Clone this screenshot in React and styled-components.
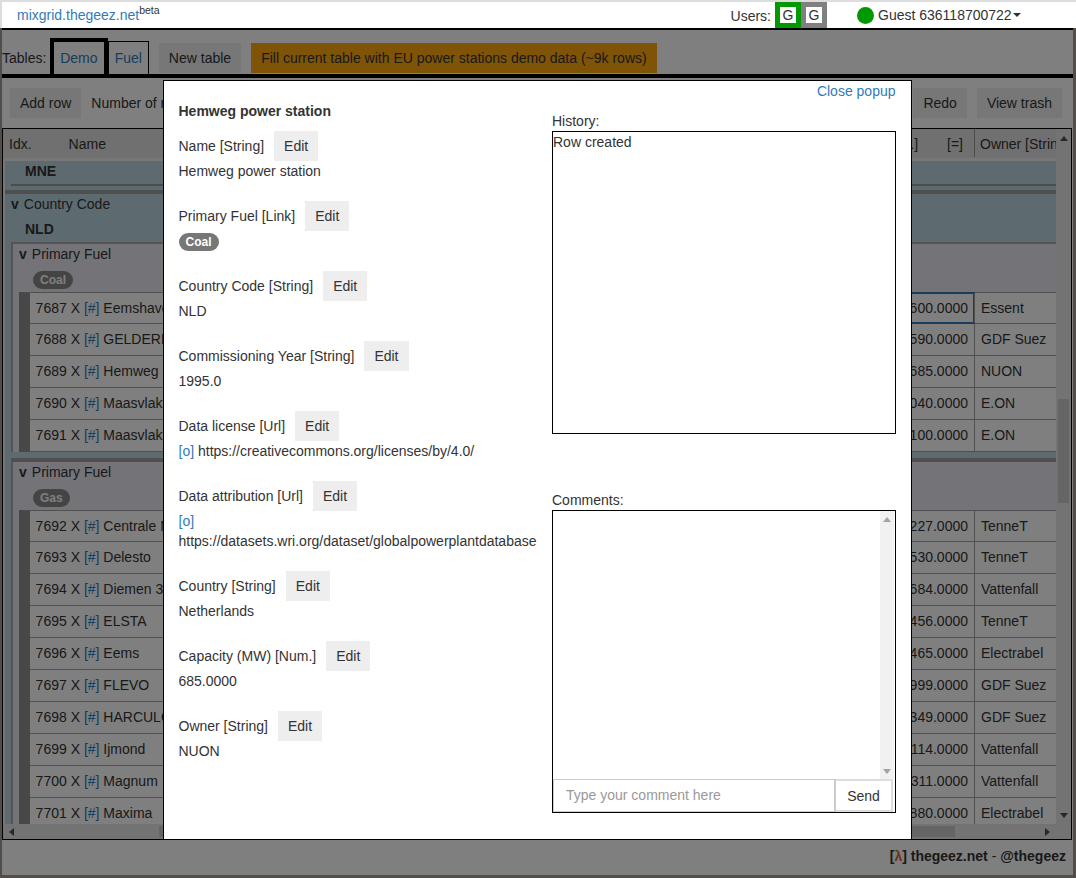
import React from "react";
import styled, { createGlobalStyle } from "styled-components";

const GlobalStyle = createGlobalStyle`
  html, body {
    margin: 0;
    padding: 0;
    overflow: hidden;
  }
  body {
    font-family: "Liberation Sans", Arial, sans-serif;
    font-size: 14px;
    line-height: 20px;
    color: #333;
  }
  * {
    box-sizing: border-box;
  }
`;

const Root = styled.div`
  display: flex;
  flex-direction: column;
  width: 1076px;
  height: 878px;
  padding: 0 3px 3px 2px;
  background: #a49e94;
  overflow: hidden;
`;

const Header = styled.div`
  position: relative;
  z-index: 20;
  display: flex;
  align-items: center;
  flex: none;
  height: 28px;
  margin: 0 -3px 0 -2px;
  padding-left: 15px;
  background: #fff;
  border-top: 2px solid #ddd;
  border-left: 2px solid #ddd;
`;

const A = styled.a`
  color: #337ab7;
  text-decoration: none;
`;

const Brand = styled(A)`
  flex: 1;
  margin-top: -1px;
  sup {
    color: #333;
    font-size: 10.5px;
    line-height: 0;
    vertical-align: baseline;
    position: relative;
    top: -6px;
  }
`;

const UsersLabel = styled.span`
  margin: 2px 4px 0 0;
`;

const UserBadge = styled.span`
  display: flex;
  align-items: center;
  justify-content: center;
  width: 26px;
  height: 26px;
  border: 5px solid ${(p) => p.$color};
  background: #fff;
`;

const Guest = styled.div`
  display: flex;
  align-items: center;
  width: 249px;
  padding-left: 30px;
`;

const Dot = styled.span`
  width: 17px;
  height: 17px;
  margin-right: 4px;
  border-radius: 50%;
  background: #090;
`;

const Caret = styled.span`
  margin-left: 1px;
  border-top: 4px solid #333;
  border-left: 4px solid transparent;
  border-right: 4px solid transparent;
`;

const Main = styled.div`
  display: flex;
  flex-direction: column;
  flex: 1;
  min-height: 0;
  background: #fff;
  border-top: 2px solid #000;
`;

const TablesBar = styled.div`
  display: flex;
  align-items: flex-end;
  flex: none;
  height: 48px;
  border-bottom: 4px solid #000;
`;

const TablesLabel = styled.span`
  align-self: flex-end;
  margin: 0 3.5px 6px 0;
`;

const Tab = styled(A)`
  display: flex;
  align-items: center;
  justify-content: center;
  height: ${(p) => (p.$active ? 36 : 33)}px;
  width: ${(p) => (p.$active ? 58 : 41)}px;
  border: ${(p) => (p.$active ? "4px" : "1px")} solid #000;
  border-bottom: 0;
`;

const Button = styled.button`
  height: 30px;
  margin: 0;
  padding: 0 10px;
  border: 0;
  border-radius: 0;
  background: ${(p) => p.$bg || "#eee"};
  color: #333;
  font: inherit;
`;

const TableButton = styled(Button)`
  margin: 0 0 1px 10px;
`;

const ActionBar = styled.div`
  display: flex;
  align-items: center;
  gap: 10px;
  flex: none;
  height: 50px;
  padding: 0 11px 0 8px;
  white-space: nowrap;
`;

const Spacer = styled.span`
  flex: 1;
`;

const GridFrame = styled.div`
  display: flex;
  flex-direction: column;
  flex: none;
  height: 712px;
  margin-right: 1px;
  border: 1px solid #000;
`;

const GridBody = styled.div`
  display: flex;
  flex: 1;
  min-height: 0;
`;

const Viewport = styled.div`
  flex: 1;
  min-width: 0;
  overflow: hidden;
  background: #eee;
`;

const HeadRow = styled.div`
  display: flex;
  height: 29px;
  background: #e0e0e0;
  white-space: nowrap;
`;

const HeadLeft = styled.div`
  display: flex;
  flex: 1;
  gap: 37px;
  padding: 5px 0 0 6px;
`;

const HeadCapacity = styled.div`
  display: flex;
  justify-content: flex-end;
  gap: 29px;
  width: 200px;
  padding: 5px 11px 0 0;
`;

const HeadOwner = styled.div`
  width: 82px;
  margin-bottom: 1px;
  padding: 5px 0 0 5px;
  border-left: 1px solid #999;
  overflow: hidden;
`;

const BlueZone = styled.div`
  margin-left: 2px;
  background: #bbd5e0;
`;

const GroupTitle = styled.div`
  height: 20px;
  margin-top: ${(p) => p.$top}px;
  padding-left: 20px;
  font-weight: 700;
`;

const OrphanRule = styled.div`
  height: 2px;
  margin: 3px 0 4px 6px;
  background: #999;
`;

const CountryGroup = styled.div`
  border-top: 4px solid #9e9e9e;
`;

const GroupLabel = styled.div`
  height: 20px;
  padding-left: 6px;
  b {
    margin-right: 5px;
  }
`;

const FuelBox = styled.div`
  margin: ${(p) => (p.$first ? "3px" : "6px")} 0 0 6px;
  background: #e8e8f0;
  border-top: ${(p) => (p.$first ? "2px solid #a8a8a8" : "4px solid #9e9e9e")};
  border-left: 2px solid #a8a8a8;
`;

const PillRow = styled.div`
  padding: 7px 0 3px 20px;
  line-height: 0;
`;

const Pill = styled.span`
  display: inline-block;
  padding: 3px 7px;
  border-radius: 10px;
  background: ${(p) => p.$bg || "#777"};
  color: #fff;
  font-size: 12px;
  font-weight: 700;
  line-height: 12px;
`;

const Rows = styled.div`
  margin-left: 6px;
  border-left: 11px solid #909090;
  border-top: 1px solid #a0a0a0;
  background: #fff;
`;

const Row = styled.div`
  display: flex;
  height: 32px;
  border-bottom: 1px solid #a0a0a0;
  white-space: nowrap;
  &:first-child {
    height: 31px;
  }
`;

const RowName = styled.div`
  flex: 1;
  padding: 5px 0 0 5.6px;
`;

const RowCapacity = styled.div`
  width: 200px;
  padding: 5px 6px 0 0;
  text-align: right;
  ${(p) => p.$selected && "outline: 2px solid #337ab7; outline-offset: -1px;"}
`;

const RowOwner = styled.div`
  width: 82px;
  padding: 5px 0 0 6px;
  border-left: 1px solid #a0a0a0;
`;

const VScrollbar = styled.div`
  display: flex;
  flex-direction: column;
  align-items: center;
  flex: none;
  width: 15px;
  padding: 7px 0 6px;
  background: #e6e6e6;
`;

const VThumb = styled.div`
  width: 11px;
  height: 104px;
  margin-top: 258px;
  background: #cacaca;
`;

const HScrollbar = styled.div`
  display: flex;
  align-items: center;
  flex: none;
  height: 15px;
  padding: 0 21px 0 6px;
  background: #e6e6e6;
`;

const HThumb = styled.div`
  flex: none;
  width: 796px;
  height: 11px;
  margin-left: 145px;
  background: #cacaca;
`;

const ArrowUp = styled.span`
  border-bottom: 5px solid ${(p) => p.$color || "#505050"};
  border-left: 4px solid transparent;
  border-right: 4px solid transparent;
`;

const ArrowDown = styled.span`
  margin-top: auto;
  border-top: 5px solid ${(p) => p.$color || "#505050"};
  border-left: 4px solid transparent;
  border-right: 4px solid transparent;
`;

const ArrowLeft = styled.span`
  border-right: 5px solid #505050;
  border-top: 4px solid transparent;
  border-bottom: 4px solid transparent;
`;

const ArrowRight = styled.span`
  margin-left: auto;
  border-left: 5px solid #505050;
  border-top: 4px solid transparent;
  border-bottom: 4px solid transparent;
`;

const Footer = styled.div`
  display: flex;
  justify-content: flex-end;
  flex: none;
  padding: 6px 7px 0 0;
  height: 35px;
  b {
    font-weight: 700;
  }
  i {
    color: #d9661f;
    font-style: normal;
  }
`;

const Overlay = styled.div`
  position: fixed;
  inset: 0;
  z-index: 10;
  background: rgba(0, 0, 0, 0.5);
`;

const Popup = styled.div`
  position: fixed;
  z-index: 15;
  top: 80px;
  left: 163px;
  display: flex;
  gap: 15.5px;
  width: 749px;
  height: 759px;
  padding: 0 15px 0 14.5px;
  background: #fff;
  border: 1px solid #000;
  border-bottom: 0;
`;

const LeftColumn = styled.div`
  width: 358px;
  padding-top: 20px;
`;

const RightColumn = styled.div`
  display: flex;
  flex-direction: column;
  width: 344px;
`;

const Title = styled.div`
  margin-bottom: 10px;
  font-weight: 700;
`;

const Field = styled.div`
  margin-bottom: 20px;
`;

const FieldHead = styled.div`
  display: flex;
  align-items: center;
  gap: 10px;
  height: 30px;
`;

const FieldValue = styled.div`
  min-height: 20px;
`;

const CloseLink = styled(A)`
  align-self: flex-end;
  margin: 0 0.5px 10px 0;
`;

const HistoryBox = styled.div`
  height: 303px;
  border: 1px solid #000;
`;

const CommentsLabel = styled.div`
  margin-top: 56px;
`;

const CommentsBox = styled.div`
  display: flex;
  flex-direction: column;
  height: 303px;
  border: 1px solid #000;
`;

const CommentsList = styled.div`
  display: flex;
  flex: 1;
  justify-content: flex-end;
  min-height: 0;
  padding-right: 1px;
`;

const CommentsScroll = styled.div`
  display: flex;
  flex-direction: column;
  align-items: center;
  width: 14px;
  padding: 6px 0 5px;
  background: #f1f1f1;
`;

const CommentForm = styled.div`
  display: flex;
  flex: none;
  height: 33px;
  padding-right: 2px;
`;

const CommentInput = styled.div`
  flex: 1;
  padding: 5px 12px;
  border: 1px solid #ccc;
  border-right-width: 2px;
  color: #999;
`;

const SendButton = styled.div`
  display: flex;
  align-items: center;
  justify-content: center;
  width: 57px;
  border: 2px solid #ddd;
  border-left: 0;
`;

const groups = [
  {
    fuel: "Coal",
    rows: [
      ["7687", "Eemshaven", "1600.0000", "Essent"],
      ["7688", "GELDERLAND", "590.0000", "GDF Suez"],
      ["7689", "Hemweg", "685.0000", "NUON"],
      ["7690", "Maasvlakte", "1040.0000", "E.ON"],
      ["7691", "Maasvlakte", "1100.0000", "E.ON"],
    ],
  },
  {
    fuel: "Gas",
    rows: [
      ["7692", "Centrale Maasbracht", "1227.0000", "TenneT"],
      ["7693", "Delesto", "1530.0000", "TenneT"],
      ["7694", "Diemen 33", "684.0000", "Vattenfall"],
      ["7695", "ELSTA", "456.0000", "TenneT"],
      ["7696", "Eems", "2465.0000", "Electrabel"],
      ["7697", "FLEVO", "999.0000", "GDF Suez"],
      ["7698", "HARCULO", "349.0000", "GDF Suez"],
      ["7699", "Ijmond", "114.0000", "Vattenfall"],
      ["7700", "Magnum", "1311.0000", "Vattenfall"],
      ["7701", "Maxima", "880.0000", "Electrabel"],
    ],
  },
];

const fields = [
  { label: "Name [String]", value: "Hemweg power station" },
  { label: "Primary Fuel [Link]", value: <Pill>Coal</Pill> },
  { label: "Country Code [String]", value: "NLD" },
  { label: "Commissioning Year [String]", value: "1995.0" },
  {
    label: "Data license [Url]",
    value: (
      <>
        <A>[o]</A> https://creativecommons.org/licenses/by/4.0/
      </>
    ),
  },
  {
    label: "Data attribution [Url]",
    value: (
      <>
        <A>[o]</A> https://datasets.wri.org/dataset/globalpowerplantdatabase
      </>
    ),
  },
  { label: "Country [String]", value: "Netherlands" },
  { label: "Capacity (MW) [Num.]", value: "685.0000" },
  { label: "Owner [String]", value: "NUON" },
];

export default function App() {
  return (
    <Root>
      <GlobalStyle />
      <Header>
        <Brand>
          mixgrid.thegeez.net<sup>beta</sup>
        </Brand>
        <UsersLabel>Users:</UsersLabel>
        <UserBadge $color="#090">G</UserBadge>
        <UserBadge $color="#808080">G</UserBadge>
        <Guest>
          <Dot />
          Guest 636118700722
          <Caret />
        </Guest>
      </Header>

      <Main>
        <TablesBar>
          <TablesLabel>Tables:</TablesLabel>
          <Tab $active>Demo</Tab>
          <Tab>Fuel</Tab>
          <TableButton>New table</TableButton>
          <TableButton $bg="#ffa90f">
            Fill current table with EU power stations demo data (~9k rows)
          </TableButton>
        </TablesBar>

        <ActionBar>
          <Button>Add row</Button>
          <span>Number of rows</span>
          <Spacer />
          <Button>Redo</Button>
          <Button>View trash</Button>
        </ActionBar>

        <GridFrame>
          <GridBody>
            <Viewport>
              <HeadRow>
                <HeadLeft>
                  <span>Idx.</span>
                  <span>Name</span>
                </HeadLeft>
                <HeadCapacity>
                  <span>Capacity (MW) [Num.]</span>
                  <span>[=]</span>
                </HeadCapacity>
                <HeadOwner>Owner [String]</HeadOwner>
              </HeadRow>
              <BlueZone>
                <GroupTitle $top={3}>MNE</GroupTitle>
                <OrphanRule />
                <CountryGroup>
                  <GroupLabel>
                    <b>v</b>Country Code
                  </GroupLabel>
                  <GroupTitle $top={5}>NLD</GroupTitle>
                  {groups.map((group, i) => (
                    <FuelBox key={group.fuel} $first={i === 0}>
                      <GroupLabel>
                        <b>v</b>Primary Fuel
                      </GroupLabel>
                      <PillRow>
                        <Pill $bg="#888">{group.fuel}</Pill>
                      </PillRow>
                      <Rows>
                        {group.rows.map(([idx, name, capacity, owner]) => (
                          <Row key={idx}>
                            <RowName>
                              {idx} X <A>[#]</A> {name}
                            </RowName>
                            <RowCapacity $selected={idx === "7687"}>
                              {capacity}
                            </RowCapacity>
                            <RowOwner>{owner}</RowOwner>
                          </Row>
                        ))}
                      </Rows>
                    </FuelBox>
                  ))}
                </CountryGroup>
              </BlueZone>
            </Viewport>
            <VScrollbar>
              <ArrowUp />
              <VThumb />
              <ArrowDown />
            </VScrollbar>
          </GridBody>
          <HScrollbar>
            <ArrowLeft />
            <HThumb />
            <ArrowRight />
          </HScrollbar>
        </GridFrame>

        <Footer>
          <span>
            <b>
              [<i>λ</i>] thegeez.net
            </b>{" "}
            - <b>@thegeez</b>
          </span>
        </Footer>
      </Main>

      <Overlay />

      <Popup>
        <LeftColumn>
          <Title>Hemweg power station</Title>
          {fields.map((field) => (
            <Field key={field.label}>
              <FieldHead>
                <span>{field.label}</span>
                <Button>Edit</Button>
              </FieldHead>
              <FieldValue>{field.value}</FieldValue>
            </Field>
          ))}
        </LeftColumn>
        <RightColumn>
          <CloseLink>Close popup</CloseLink>
          <div>History:</div>
          <HistoryBox>Row created</HistoryBox>
          <CommentsLabel>Comments:</CommentsLabel>
          <CommentsBox>
            <CommentsList>
              <CommentsScroll>
                <ArrowUp $color="#a3a3a3" />
                <ArrowDown $color="#a3a3a3" />
              </CommentsScroll>
            </CommentsList>
            <CommentForm>
              <CommentInput>Type your comment here</CommentInput>
              <SendButton>Send</SendButton>
            </CommentForm>
          </CommentsBox>
        </RightColumn>
      </Popup>
    </Root>
  );
}
